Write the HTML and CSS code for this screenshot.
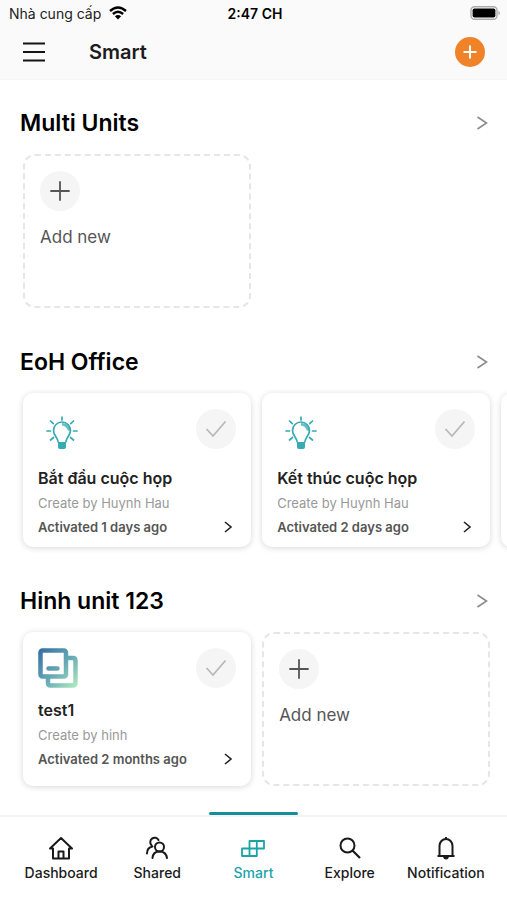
FILE: index.html
```html
<!DOCTYPE html>
<html lang="vi">
<head>
<meta charset="utf-8">
<meta name="viewport" content="width=device-width, initial-scale=1">
<title>Smart</title>
<link rel="stylesheet" href="styles.css">
</head>
<body>
<svg class="defs" aria-hidden="true">
  <defs>
    <linearGradient id="squares-fill" x1="0" y1="0" x2="40" y2="40" gradientUnits="userSpaceOnUse">
      <stop offset="0" stop-color="#2f6aa5"/>
      <stop offset="0.55" stop-color="#69adb5"/>
      <stop offset="1" stop-color="#b4efc0"/>
    </linearGradient>
    <symbol id="chevron" viewBox="0 0 12 16"><path d="M1.500 2 10.500 8 1.500 14" fill="none" stroke="currentColor" stroke-width="1.600"/></symbol>
    <symbol id="arrow" viewBox="0 0 10 12"><path d="M2 1 8 6 2 11" fill="none" stroke="currentColor" stroke-width="1.600"/></symbol>
    <symbol id="plus" viewBox="0 0 20 20"><path d="M10 1v18M1 10h18" fill="none" stroke="currentColor" stroke-width="1.800" stroke-linecap="round"/></symbol>
    <symbol id="check" viewBox="0 0 22 18"><path d="M1.500 9 8 16 20.500 1.500" fill="none" stroke="currentColor" stroke-width="1.800"/></symbol>
    <symbol id="bulb" viewBox="0 0 32 34">
      <g fill="none" stroke="currentColor" stroke-width="1.700" stroke-linecap="round">
        <path d="M12.200 26C12 21.500 7.500 19.500 7.500 14.500a8.500 8.500 0 0 1 17 0c0 5-4.500 7-4.700 11.500"/>
        <path d="M16 1v3M4.500 5l2.800 2.700M27.500 5l-2.800 2.700M1 15h3.500M27.500 15H31M4.500 24l3-2.500M27.500 24l-3-2.500"/>
      </g>
      <path d="M12 26h8v5q0 2-2 2h-4q-2 0-2-2z" fill="currentColor"/>
      <path d="M16 7q8 0 8 8-2.500 0-3-2-.800-3-5-3.500z" fill="currentColor" opacity=".75"/>
    </symbol>
  </defs>
</svg>

<header class="top">
  <div class="status">
    <span class="carrier">Nhà cung cấp
      <svg width="18" height="14" viewBox="0 0 18 14" aria-hidden="true"><path d="M1 5Q9-2.200 17 5M3.900 8Q9 3.400 14.100 8" fill="none" stroke="#000" stroke-width="2.400"/><path d="M5.900 10.200Q9 7.600 12.100 10.200L9 13.400z"/></svg>
    </span>
    <time class="clock">2:47 CH</time>
    <svg class="battery" width="31" height="14" viewBox="0 0 31 14" role="img" aria-label="Pin"><rect x="1" y=".800" width="26" height="12.400" rx="3.500" fill="#fff" stroke="#aaa" stroke-width="1.400"/><rect x="2.600" y="2.500" width="22.800" height="9" rx="1.800"/><path d="M28.500 4.700q3 2.300 0 4.600z" fill="#aaa"/></svg>
  </div>
  <div class="toolbar">
    <button class="menu" type="button" aria-label="Menu"><svg width="22" height="20" viewBox="0 0 22 20"><path d="M0 1.500h22M0 10h22M0 18.500h22" stroke="#151515" stroke-width="2.200"/></svg></button>
    <h1>Smart</h1>
    <button class="create" type="button" aria-label="Create"><svg width="14" height="14" viewBox="0 0 14 14"><path d="M7 .500v13M.500 7h13" stroke="#fff" stroke-width="2"/></svg></button>
  </div>
</header>

<main>
  <section>
    <a class="heading" href="#multi"><h2>Multi Units</h2><svg width="12" height="16"><use href="#chevron"/></svg></a>
    <div class="row">
      <button class="add" type="button"><span class="disc"><svg width="20" height="20"><use href="#plus"/></svg></span><span>Add new</span></button>
    </div>
  </section>

  <section>
    <a class="heading" href="#eoh"><h2>EoH Office</h2><svg width="12" height="16"><use href="#chevron"/></svg></a>
    <div class="row">
      <article class="card">
        <div class="card-top"><svg class="bulb" width="32" height="34"><use href="#bulb"/></svg><button class="disc run" type="button" aria-label="Run"><svg width="22" height="18"><use href="#check"/></svg></button></div>
        <h3>Bắt đầu cuộc họp</h3>
        <p class="author">Create by Huynh Hau</p>
        <a class="activity" href="#start">Activated 1 days ago<svg width="10" height="12"><use href="#arrow"/></svg></a>
      </article>
      <article class="card">
        <div class="card-top"><svg class="bulb" width="32" height="34"><use href="#bulb"/></svg><button class="disc run" type="button" aria-label="Run"><svg width="22" height="18"><use href="#check"/></svg></button></div>
        <h3>Kết thúc cuộc họp</h3>
        <p class="author">Create by Huynh Hau</p>
        <a class="activity" href="#end">Activated 2 days ago<svg width="10" height="12"><use href="#arrow"/></svg></a>
      </article>
      <article class="card"></article>
    </div>
  </section>

  <section>
    <a class="heading" href="#hinh"><h2>Hinh unit 123</h2><svg width="12" height="16"><use href="#chevron"/></svg></a>
    <div class="row">
      <article class="card compact">
        <div class="card-top"><svg width="40" height="40" viewBox="0 0 40 40" aria-hidden="true"><g fill="none" stroke="url(#squares-fill)" stroke-width="4.500" stroke-linejoin="round" stroke-linecap="round"><rect x="2.500" y="2.500" width="25.500" height="26" rx="2"/><path d="M28 10h7q2.500 0 2.500 2.500V35q0 2.500-2.500 2.500H12.500Q10 37.500 10 35v-6M10.500 20.500h9v.010"/></g></svg><button class="disc run" type="button" aria-label="Run"><svg width="22" height="18"><use href="#check"/></svg></button></div>
        <h3>test1</h3>
        <p class="author">Create by hinh</p>
        <a class="activity" href="#test1">Activated 2 months ago<svg width="10" height="12"><use href="#arrow"/></svg></a>
      </article>
      <button class="add" type="button"><span class="disc"><svg width="20" height="20"><use href="#plus"/></svg></span><span>Add new</span></button>
    </div>
  </section>
</main>

<nav class="tabs">
  <a href="#dashboard"><svg width="24" height="24" viewBox="0 0 24 24"><path d="M1 12.500 12 2l11 10.500h-3V22.500H4V12.500zM9.500 22.500V15.500h5v7" fill="none" stroke="currentColor" stroke-width="2" stroke-linejoin="round"/></svg>Dashboard</a>
  <a href="#shared"><svg width="24" height="24" viewBox="0 0 24 24"><g fill="none" stroke="currentColor" stroke-width="2" stroke-linecap="round"><circle cx="14.500" cy="11" r="4.500"/><path d="M7.500 22q.500-6.500 7-6.500t7.500 6.500M13.500 4A4.400 4.400 0 1 0 6.500 9.200M2 17.500Q2 11.500 7.500 10.500"/></g></svg>Shared</a>
  <a class="active" href="#smart" aria-current="page"><svg width="24" height="24" viewBox="0 0 24 24"><path d="M8.500 5H23v7.500H8.500zM1 12.500h14.800V20H1zM15.800 5v7.500M8.500 12.500V20" fill="none" stroke="currentColor" stroke-width="1.800" stroke-linejoin="round"/></svg>Smart</a>
  <a href="#explore"><svg width="24" height="24" viewBox="0 0 24 24"><circle cx="9.500" cy="9.500" r="7" fill="none" stroke="currentColor" stroke-width="2"/><path d="M14.500 14.500 22 22" stroke="currentColor" stroke-width="2.200"/></svg>Explore</a>
  <a href="#notification"><svg width="24" height="24" viewBox="0 0 24 24"><path d="M3.500 20h17M5.500 20V10a6.500 7 0 0 1 13 0v10M12 3V1" fill="none" stroke="currentColor" stroke-width="2"/><path d="M9 20.500h6q-.500 3-3 3t-3-3z" fill="currentColor"/></svg>Notification</a>
</nav>
</body>
</html>
```
FILE: styles.css
```css
* { box-sizing: border-box; }

body {
  margin: 0;
  min-height: 100vh;
  display: flex;
  flex-direction: column;
  background: #fff;
  color: #000;
  font-family: Inter, "Noto Sans", sans-serif;
}

h1, h2, h3, p { margin: 0; }
a { color: inherit; text-decoration: none; }
svg { display: block; flex: none; }
.defs { position: absolute; width: 0; height: 0; }

button {
  padding: 0;
  border: 0;
  background: none;
  color: inherit;
  font: inherit;
  cursor: pointer;
}

.top {
  height: 80px;
  background: #fafafa;
  border-bottom: 1px solid #f6f6f6;
}

.status {
  display: grid;
  grid-template-columns: 1fr auto 1fr;
  align-items: center;
  height: 26px;
  padding: 0 6px 0 9px;
  font-size: 14px;
  color: #222;
}
.carrier { display: flex; align-items: center; gap: 8px; }
.clock { font-weight: 600; color: #000; }
.battery { justify-self: end; }

.toolbar {
  display: flex;
  align-items: center;
  height: 52px;
  padding: 0 22px 0 23px;
}
.toolbar h1 {
  flex: 1;
  margin-left: 44px;
  font-size: 20px;
  font-weight: 600;
  color: #1c1c1c;
}
.create {
  display: grid;
  place-items: center;
  width: 30px;
  height: 30px;
  border-radius: 50%;
  background: #f08228;
}

main {
  flex: 1;
  display: flex;
  flex-direction: column;
  gap: 40px;
  padding: 29px 0;
  overflow: hidden;
}

.heading {
  display: flex;
  align-items: center;
  justify-content: space-between;
  height: 28px;
  margin-bottom: 17px;
  padding: 0 19px 0 20px;
}
.heading h2 { font-size: 23px; font-weight: 600; }
.heading svg { color: #8c8c8c; }

.row {
  display: flex;
  gap: 11px;
  padding: 0 23px;
}

.card, .add {
  flex: 0 0 45vw;
  height: 154px;
  border-radius: 10px;
}
.card {
  display: flex;
  flex-direction: column;
  padding: 16px 15px 8px;
  background: #fff;
  box-shadow: 0 1px 6px rgba(0, 0, 0, 0.16);
}
.card-top {
  display: flex;
  justify-content: space-between;
  height: 56px;
}
.card-top { height: 59px; }
.bulb { margin: 7px 0 0 8px; color: #36abb2; }
.card h3 {
  font-size: 16px;
  line-height: 26px;
  font-weight: 600;
  color: #222;
}
.author {
  font-size: 13px;
  line-height: 24px;
  color: #999;
}
.activity {
  display: flex;
  align-items: center;
  justify-content: space-between;
  padding-right: 3px;
  font-size: 13px;
  line-height: 24px;
  font-weight: 600;
  color: #555;
}
.activity svg { color: #222; }
.compact .card-top { height: 49px; }

.disc {
  display: grid;
  place-items: center;
  width: 40px;
  height: 40px;
  border-radius: 50%;
  background: #f5f5f5;
}
.run { color: #b8b8b8; }

.add {
  display: flex;
  flex-direction: column;
  align-items: flex-start;
  gap: 12px;
  padding: 15px;
  border: 2px dashed #e6e6e6;
  border-radius: 12px;
  font-size: 17px;
  line-height: 28px;
  color: #555;
}

.tabs {
  display: grid;
  grid-template-columns: repeat(5, 1fr);
  height: 85px;
  padding: 0 13px;
  border-top: 2px solid #f3f3f3;
}
.tabs a {
  position: relative;
  display: flex;
  flex-direction: column;
  align-items: center;
  gap: 3px;
  padding-top: 19px;
  font-size: 14px;
  line-height: 20px;
  font-weight: 500;
  color: #1a1a1a;
}
.tabs .active { color: #1ba3aa; }
.active::before {
  content: "";
  position: absolute;
  top: -5px;
  left: 4px;
  right: 4px;
  height: 3px;
  border-radius: 2px;
  background: #148f99;
}
```
